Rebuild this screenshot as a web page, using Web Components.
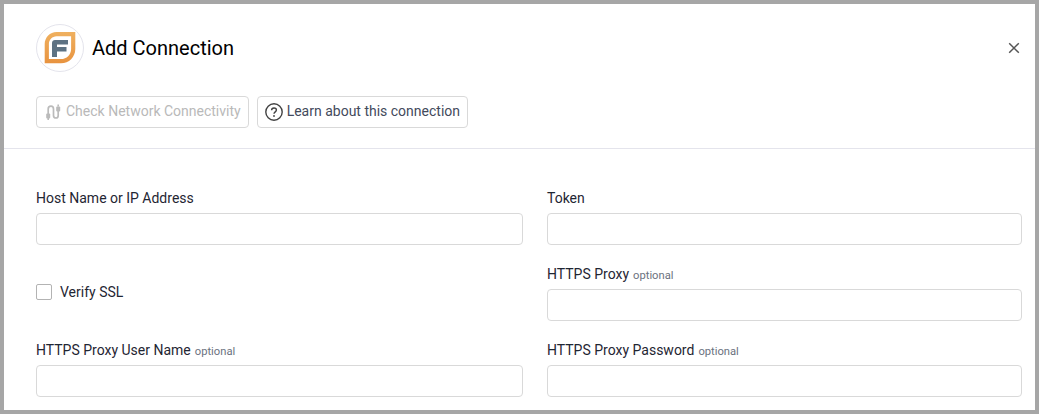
<!DOCTYPE html>
<html>
<head>
<meta charset="utf-8">
<title>Add Connection</title>
<style>
    html, body { margin: 0; height: 100%; }
    body {
        background: #a6a6a6;
        padding: 4px;
        box-sizing: border-box;
        overflow: hidden;
        font-family: Roboto, "Liberation Sans", sans-serif;
    }
</style>
</head>
<body>
<connection-dialog>
    <text-field slot="fields" label="Host Name or IP Address"></text-field>
    <text-field slot="fields" label="Token"></text-field>
    <check-field slot="fields" label="Verify SSL"></check-field>
    <text-field slot="fields" label="HTTPS Proxy" optional></text-field>
    <text-field slot="fields" label="HTTPS Proxy User Name" optional></text-field>
    <text-field slot="fields" label="HTTPS Proxy Password" optional></text-field>
</connection-dialog>

<script>
class ConnectionDialog extends HTMLElement {
    constructor() {
        super();
        this.attachShadow({ mode: 'open' });
    }

    connectedCallback() {
        this.shadowRoot.innerHTML = `
            <style>
                :host {
                    display: block;
                    height: 406px;
                    background: #fff;
                    overflow: hidden;
                    color: #1f2633;
                }
                header {
                    padding: 20px 13px 20px 32px;
                    border-bottom: 1px solid #e4e4ec;
                }
                .title {
                    display: flex;
                    align-items: center;
                    gap: 8px;
                    height: 48px;
                }
                .logo {
                    width: 48px;
                    height: 48px;
                    box-sizing: border-box;
                    border: 1px solid #e4e4ec;
                    border-radius: 50%;
                    display: flex;
                    align-items: center;
                    justify-content: center;
                }
                h1 {
                    flex: 1;
                    margin: 0;
                    font-size: 20px;
                    font-weight: 400;
                    color: #000;
                }
                .close {
                    width: 14px;
                    height: 14px;
                    margin-right: 1px;
                    display: block;
                }
                .actions {
                    display: flex;
                    gap: 8px;
                    margin-top: 24px;
                }
                .btn {
                    display: flex;
                    align-items: center;
                    gap: 4px;
                    height: 32px;
                    box-sizing: border-box;
                    padding: 0 7px 2px;
                    border: 1px solid #d9d9d9;
                    border-radius: 4px;
                    font-size: 14px;
                    color: #434a5c;
                    background: #fff;
                }
                .btn svg { margin-top: 2px; }
                .btn.disabled { color: #b9b9b9; }
                .fields {
                    display: grid;
                    grid-template-columns: 487px 475px;
                    column-gap: 24px;
                    row-gap: 19px;
                    padding: 39px 0 0 32px;
                }
            </style>
            <header>
                <div class="title">
                    <div class="logo">
                        <svg width="36" height="36" viewBox="0 0 36 36">
                            <defs>
                                <linearGradient id="leaf" x1="0" y1="0" x2="0" y2="1">
                                    <stop offset="0" stop-color="#efb05f"/>
                                    <stop offset="1" stop-color="#e8933f"/>
                                </linearGradient>
                            </defs>
                            <path fill-rule="evenodd" fill="url(#leaf)" d="M14.5 2H33.3V19C33.3 27 27 33.3 19 33.3H2.7V14C2.7 7.5 8 2 14.5 2ZM14.5 6.2C10.4 6.2 6.9 9.8 6.9 14V29.1H19C24.6 29.1 29.1 24.6 29.1 19V6.2Z"/>
                            <path d="M13 10H26V14.5H15V17H24.5V21.5H15V27H10V13C10 11.3 11.3 10 13 10Z" fill="#5d7283"/>
                        </svg>
                    </div>
                    <h1>Add Connection</h1>
                    <svg class="close" viewBox="0 0 14 14">
                        <path d="M2.2 2.2L11.8 11.8M11.8 2.2L2.2 11.8" stroke="#555" stroke-width="1.5" fill="none"/>
                    </svg>
                </div>
                <div class="actions">
                    <div class="btn disabled">
                        <svg width="18" height="18" viewBox="0 0 18 18" fill="none" stroke="#bbb" stroke-width="1.7">
                            <path d="M4.2 11V6C4.2 4.4 5.4 3.2 7 3.2C8.6 3.2 9.5 4.4 9.5 6V12.5C9.5 14 10.5 15 12 15C13.4 15 14.2 14 14.2 12.5V7"/>
                            <rect x="2.2" y="10.5" width="4" height="5" rx="1" fill="#bbb" stroke="none"/>
                            <rect x="3.4" y="15" width="1.6" height="2" fill="#bbb" stroke="none"/>
                            <rect x="12.2" y="3.5" width="4" height="5" rx="1" fill="#bbb" stroke="none"/>
                            <rect x="13.4" y="1.5" width="1.6" height="2" fill="#bbb" stroke="none"/>
                        </svg>
                        <span>Check Network Connectivity</span>
                    </div>
                    <div class="btn">
                        <svg width="18" height="18" viewBox="0 0 18 18" fill="none" stroke="#434343" stroke-width="1.4">
                            <circle cx="9" cy="9" r="8.2"/>
                            <path d="M6.6 7.2C6.6 5.8 7.7 5 9 5C10.4 5 11.4 5.9 11.4 7.1C11.4 8.8 9 8.9 9 10.8"/>
                            <circle cx="9" cy="13" r="0.9" fill="#434343" stroke="none"/>
                        </svg>
                        <span>Learn about this connection</span>
                    </div>
                </div>
            </header>
            <div class="fields"><slot name="fields"></slot></div>
        `;
    }
}

class TextField extends HTMLElement {
    constructor() {
        super();
        this.attachShadow({ mode: 'open' });
    }

    connectedCallback() {
        const opt = this.hasAttribute('optional') ? '<small>optional</small>' : '';
        this.shadowRoot.innerHTML = `
            <style>
                :host { display: block; }
                label {
                    display: block;
                    height: 20px;
                    line-height: 20px;
                    margin-bottom: 5px;
                    font-size: 14px;
                    color: #1f2633;
                }
                small {
                    margin-left: 4px;
                    font-size: 11.2px;
                    color: #6b7280;
                }
                input {
                    display: block;
                    width: 100%;
                    height: 32px;
                    box-sizing: border-box;
                    border: 1px solid #d9d9d9;
                    border-radius: 4px;
                    background: #fff;
                    outline: none;
                }
            </style>
            <label>${this.getAttribute('label')}${opt}</label>
            <input type="text">
        `;
    }
}

class CheckField extends HTMLElement {
    constructor() {
        super();
        this.attachShadow({ mode: 'open' });
    }

    connectedCallback() {
        this.shadowRoot.innerHTML = `
            <style>
                :host {
                    display: flex;
                    align-items: center;
                    gap: 8px;
                    padding-bottom: 2px;
                    font-size: 14px;
                    color: #1f2633;
                }
                .box {
                    width: 16px;
                    height: 16px;
                    box-sizing: border-box;
                    border: 1px solid #b3b3b3;
                    border-radius: 2px;
                    background: #fff;
                }
            </style>
            <span class="box"></span>
            <span>${this.getAttribute('label')}</span>
        `;
    }
}

customElements.define('connection-dialog', ConnectionDialog);
customElements.define('text-field', TextField);
customElements.define('check-field', CheckField);
</script>
</body>
</html>
